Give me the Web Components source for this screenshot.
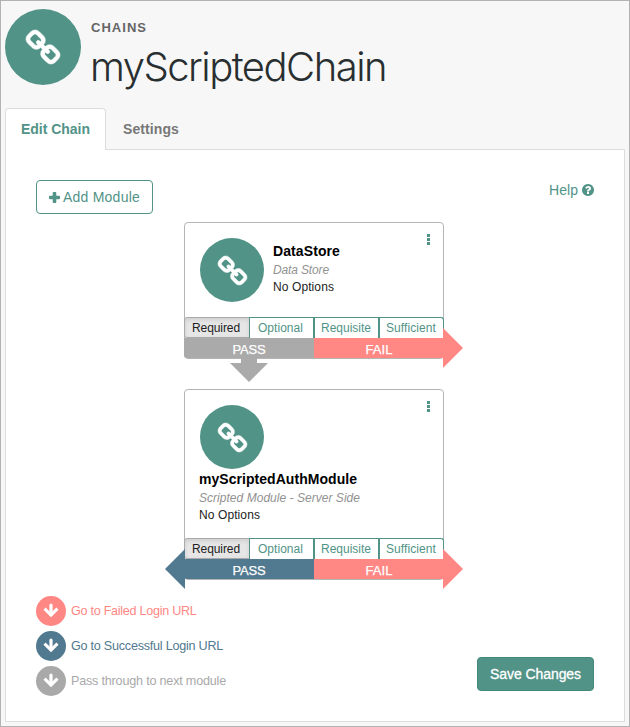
<!DOCTYPE html>
<html lang="en">
<head>
<meta charset="utf-8">
<title>myScriptedChain</title>
<style>
html,body{margin:0;padding:0}
body{width:630px;height:727px;overflow:hidden;font-family:"Liberation Sans",Arial,sans-serif;color:#222}
</style>
</head>
<body>
<chain-page></chain-page>
<script>
const define=(name,html,setup)=>customElements.define(name,class extends HTMLElement{
  connectedCallback(){
    if(this.shadowRoot)return;
    const t=document.createElement('template');
    t.innerHTML=html;
    this.attachShadow({mode:'open'}).append(t.content.cloneNode(true));
    if(setup)setup.call(this,this.shadowRoot);
  }
});

// Text whose tracking is adjusted to occupy the width given in "w".
define('fit-text',`<style>:host{display:inline-block;white-space:nowrap;text-align:left}span{display:inline-block}</style><span><slot></slot></span>`,function(r){
  const s=r.querySelector('span'),w=+this.getAttribute('w');
  const n=this.textContent.length;
  this.style.width=w+'px';
  s.style.letterSpacing=((w-s.getBoundingClientRect().width)/n)+'px';
});

define('link-badge',`<style>
:host{display:flex;flex:none;align-items:center;justify-content:center;width:var(--d,64px);height:var(--d,64px);border-radius:50%;background:#519387}
svg{width:var(--i,29px);height:var(--i,29px);fill:#fff;stroke:#fff;stroke-width:28;overflow:visible;display:block}</style>
<svg viewBox="16 16 1632 1632"><path d="M1456 1216q0-40-28-68l-208-208q-28-28-68-28-42 0-72 32 3 3 19 18.500t21.500 21.500 15 19 13 25.500 3.500 27.500q0 40-28 68t-68 28q-15 0-27.500-3.500t-25.500-13-19-15-21.500-21.500-18.500-19q-33 31-33 73 0 40 28 68l206 207q27 27 68 27 40 0 68-26l147-146q28-28 28-67zm-703-705q0-40-28-68l-206-207q-28-28-68-28-39 0-68 27l-147 146q-28 28-28 67 0 40 28 68l208 208q27 27 68 27 42 0 72-31-3-3-19-18.500t-21.500-21.500-15-19-13-25.500-3.500-27.500q0-40 28-68t68-28q15 0 27.500 3.500t25.500 13 19 15 21.500 21.500 18.500 19q33-31 33-73zm895 705q0 120-85 203l-147 146q-83 83-203 83-121 0-204-85l-206-207q-83-83-83-203 0-123 88-209l-88-88q-86 88-208 88-120 0-204-84l-208-208q-84-84-84-204t85-203l147-146q83-83 203-83 121 0 204 85l206 207q83 83 83 203 0 123-88 209l88 88q86-88 208-88 120 0 204 84l208 208q84 84 84 204z"/></svg>`);

define('page-header',`<style>
:host{display:flex;height:99px;padding:8px 0 0 4px;gap:10px}
.t{display:flex;flex-direction:column;padding-top:11px}
.k{font:bold 13px/16px "Liberation Sans",sans-serif;color:#666}
h1{margin:7px 0 0 -1px;font:300 40px/48px Inter,"Liberation Sans",sans-serif;color:#292f31}
link-badge{--d:76px;--i:34px}
</style><link-badge></link-badge><div class="t"><div class="k"><fit-text w="56">CHAINS</fit-text></div><h1><fit-text w="296">myScriptedChain</fit-text></h1></div>`);

define('tab-bar',`<style>
:host{display:flex;height:42px;margin:0 0 -1px 4px;position:relative;font:bold 14px/16px "Liberation Sans",sans-serif}
div{box-sizing:border-box;height:42px;padding:13px 0 0 17px;color:#777}
.on{width:101px;padding:12px 0 0 15px;background:#fff;border:1px solid #ddd;border-bottom:0;border-radius:4px 4px 0 0;color:#519387}
</style><div class="on"><fit-text w="69">Edit Chain</fit-text></div><div><fit-text w="56">Settings</fit-text></div>`);

define('ui-button',`<style>
:host{display:flex;box-sizing:border-box;width:117px;height:34px;align-items:center;justify-content:center;gap:3px;border:1px solid #519387;border-radius:4px;color:#519387;font-size:14px;line-height:16px;background:#fff}
:host([primary]){background:#519387;border-color:#43897b;color:#fff;-webkit-text-stroke:.3px #fff}
</style><slot></slot>`);

define('card-bar',`<style>
:host{position:relative;display:flex;height:20px;margin:0 -1px;font-size:13px;line-height:23px;color:#fff;-webkit-text-stroke:.25px #fff}
.p,.f{flex:1;display:flex;justify-content:center}
.p{background:#aaa;border-radius:0 0 0 3px}.f{background:#ff8784}
:host([success]) .p{background:#51798f}
.r,.l,.d{position:absolute}
.r{left:259px;top:-10px;width:20px;height:40px;background:#ff8784;clip-path:polygon(0 0,100% 50%,0 100%)}
.l{display:none;left:-19px;top:-10px;width:20px;height:40px;background:#51798f;clip-path:polygon(100% 0,0 50%,100% 100%)}
.d{left:46px;top:20px;width:38px;height:24px;background:#aaa;clip-path:polygon(11px 0,27px 0,27px 5px,38px 5px,19px 100%,0 5px,11px 5px)}
:host([success]) .l{display:block}:host([success]) .d{display:none}
</style><div class="p"><fit-text w="33">PASS</fit-text></div><div class="f"><fit-text w="27">FAIL</fit-text></div><i class="r"></i><i class="l"></i><i class="d"></i>`);

define('criteria-group',`<style>
:host{display:flex;height:21px;margin:0 -1px;font-size:12px;line-height:20px;color:#519387}
div{box-sizing:border-box;width:65px;height:21px;border:1px solid #519387;border-bottom:0;padding-right:1px;display:flex;justify-content:center;background:#fff}
.on{background:#e6e6e6;border:1px solid #aaa;color:#222;box-shadow:inset 0 2px 4px rgba(0,0,0,.1);border-radius:3px 0 0 3px;width:66px;margin-right:-1px}
.on+div{width:65px;margin-left:0;border-left:0;box-shadow:inset 1px 0 #519387}
.on{padding-right:2px}
div:last-child{border-top-right-radius:3px}
</style><div class="on"><fit-text w="48">Required</fit-text></div><div><fit-text w="45">Optional</fit-text></div><div><fit-text w="50">Requisite</fit-text></div><div><fit-text w="50">Sufficient</fit-text></div>`);

define('module-card',`<style>
:host{display:flex;flex:none;box-sizing:border-box;width:260px;height:137px;flex-direction:column;border:1px solid #b5b5b5;border-radius:4px;background:#fff;color:#222}
:host([stacked]){height:191px}
.b{flex:1;display:flex;padding:15px 13px 0 15px;min-height:0}
.c{display:flex;gap:9px;flex:1}
:host([stacked]) .c{flex-direction:column;gap:2px}
.x{padding-top:5px}:host([stacked]) .x{padding:0;margin-left:-1px}
.n{font:bold 14px/16px "Liberation Sans",sans-serif;color:#000}
.s{font:italic 12px/16px "Liberation Sans",sans-serif;color:#929292;margin-top:3px}
.o{font-size:12px;line-height:16px;margin-top:1px}
svg{width:3px;height:11px;margin-top:-4px;fill:#519387;display:block;flex:none}
</style><div class="b"><div class="c"><link-badge></link-badge><div class="x"><div class="n"><slot name="name"></slot></div><div class="s"><slot name="type"></slot></div><div class="o"><fit-text w="61">No Options</fit-text></div></div></div><svg viewBox="0 0 3 11"><path d="M0 0h3v3H0zM0 4h3v3H0zM0 8h3v3H0z"/></svg></div><criteria-group></criteria-group><slot name="bar"></slot>`);

define('legend-item',`<style>
:host{display:flex;align-items:center;height:30px;gap:5px;font-size:12.6px;line-height:16px}
i{display:flex;width:30px;height:30px;border-radius:50%;background:currentColor}
svg{width:30px;height:30px}
path{fill:none;stroke:#fff;stroke-width:3.2}
</style><i><svg viewBox="0 0 30 30"><path d="M15 9.200V18.500" stroke-linecap="round"/><path d="M9.700 13.800 15 19.100l5.300-5.300" stroke-linecap="square"/></svg></i><slot></slot>`);

define('chain-panel',`<style>
:host{display:flex;flex-direction:column;box-sizing:border-box;width:620px;height:573px;margin-left:4px;padding:30px 30px 20px;border:1px solid #ddd;background:#fff}
.top,.bot{display:flex;flex:none;justify-content:space-between}
.top{height:42px}
.help{display:flex;gap:4px;height:20px;align-items:center;color:#519387;font-size:14px;line-height:16px}
.help svg{width:12px;height:12px;fill:#519387}
.plus{width:11px;height:11px;fill:#519387}
.cards{display:flex;flex:none;flex-direction:column;gap:30px;padding-left:148px}
.bot{margin-top:16px}
.leg{display:flex;flex-direction:column;gap:5px}
.save{margin-top:61px}
</style>
<div class="top"><ui-button><svg class="plus" viewBox="0 0 11 11"><path d="M4.700 0h1.600q1 0 1 1v2.700H10q1 0 1 1v1.600q0 1-1 1H7.300V10q0 1-1 1H4.700q-1 0-1-1V7.300H1q-1 0-1-1V4.700q0-1 1-1h2.700V1q0-1 1-1z"/></svg><fit-text w="77">Add Module</fit-text></ui-button>
<div class="help"><fit-text w="29">Help</fit-text><svg viewBox="128 128 1536 1536"><path d="M1024 1376v-192q0-14-9-23t-23-9h-192q-14 0-23 9t-9 23v192q0 14 9 23t23 9h192q14 0 23-9t9-23zm256-672q0-88-55.500-163t-138.500-116-170-41q-243 0-371 213-15 24 8 42l132 100q7 6 19 6 16 0 25-12 53-68 86-92 34-24 86-24 48 0 85.500 26t37.500 59q0 38-20 61t-68 45q-63 28-115.500 86.500t-52.500 125.500v36q0 14 9 23t23 9h192q14 0 23-9t9-23q0-19 21.500-49.500t54.500-49.500q32-18 49-28.500t46-35 44.500-48 28-60.500 12.500-81zm384 192q0 209-103 385.500t-279.500 279.500-385.500 103-385.500-103-279.500-279.500-103-385.500 103-385.500 279.500-279.500 385.500-103 385.500 103 279.500 279.500 103 385.500z"/></svg></div></div>
<div class="cards">
<module-card><fit-text slot="name" w="67">DataStore</fit-text><fit-text slot="type" w="56">Data Store</fit-text><card-bar slot="bar"></card-bar></module-card>
<module-card stacked><fit-text slot="name" w="158">myScriptedAuthModule</fit-text><fit-text slot="type" w="161">Scripted Module - Server Side</fit-text><card-bar slot="bar" success></card-bar></module-card>
</div>
<div class="bot"><div class="leg">
<legend-item style="color:#ff8784"><fit-text w="125.500">Go to Failed Login URL</fit-text></legend-item>
<legend-item style="color:#51798f"><fit-text w="152">Go to Successful Login URL</fit-text></legend-item>
<legend-item style="color:#a9a9a9"><fit-text w="155">Pass through to next module</fit-text></legend-item>
</div><ui-button class="save" primary><fit-text w="91">Save Changes</fit-text></ui-button></div>`);

define('chain-page',`<style>
:host{display:flex;flex-direction:column;box-sizing:border-box;width:630px;height:727px;border:1px solid #b3b3b3;background:#f7f7f7}
</style><page-header></page-header><tab-bar></tab-bar><chain-panel></chain-panel>`);
</script>
</body>
</html>
